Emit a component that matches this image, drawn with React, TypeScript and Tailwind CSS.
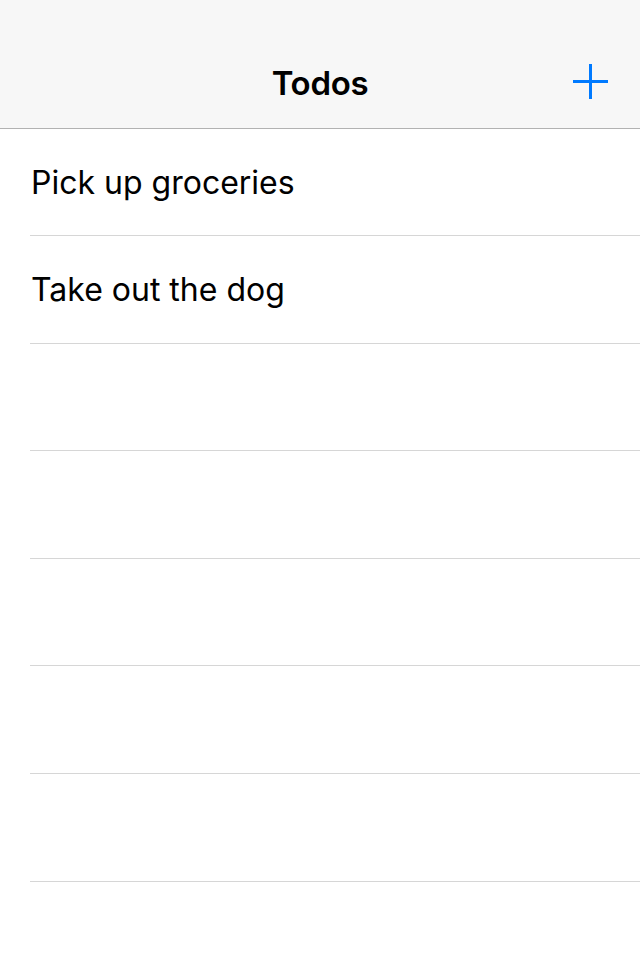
import React from 'react';

const todos = ['Pick up groceries', 'Take out the dog', '', '', '', '', ''];

const App: React.FC = () => {
  return (
    <div className="min-h-screen bg-white" style={{ fontFamily: 'Inter, "Noto Sans", sans-serif' }}>
      <header className="relative h-[129px] bg-[#f7f7f7] border-b border-[#b2b2b2] flex items-center justify-center pt-[40px]">
        <h1 className="text-[33px] font-semibold text-black tracking-[-0.3px]">Todos</h1>
        <button className="absolute right-[32px] top-[64px] w-[35px] h-[35px]" aria-label="Add">
          <svg width="35" height="35" viewBox="0 0 35 35">
            <rect x="0" y="16" width="35" height="3" fill="#007aff" />
            <rect x="16" y="0" width="3" height="35" fill="#007aff" />
          </svg>
        </button>
      </header>
      <ul className="pl-[30px]">
        {todos.map((todo, i) => (
          <li
            key={i}
            className="h-[107.6px] first:h-[107px] border-b border-[#d6d6d6] flex items-center pl-px pt-[2px] text-[32px] text-black"
          >
            {todo}
          </li>
        ))}
      </ul>
    </div>
  );
};

export default App;
